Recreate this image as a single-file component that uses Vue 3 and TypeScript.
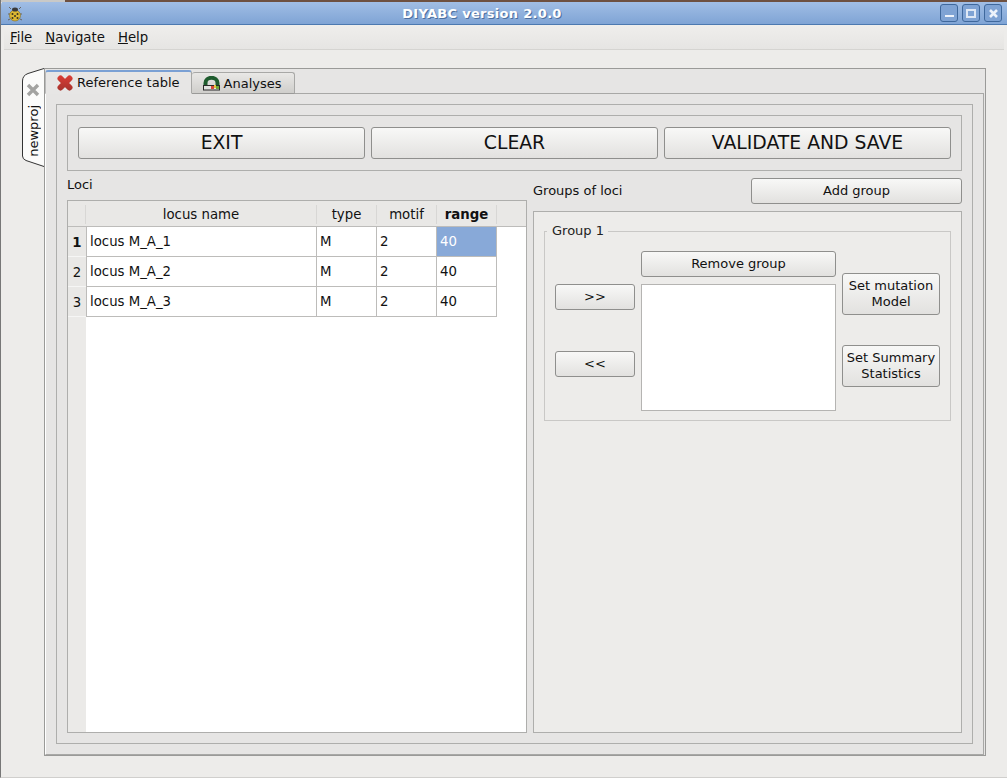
<script setup lang="ts">
interface Locus {
  name: string
  type: string
  motif: number
  range: number
}

const loci: Locus[] = [
  { name: 'locus M_A_1', type: 'M', motif: 2, range: 40 },
  { name: 'locus M_A_2', type: 'M', motif: 2, range: 40 },
  { name: 'locus M_A_3', type: 'M', motif: 2, range: 40 },
]
const menus = [
  { key: 'F', rest: 'ile' },
  { key: 'N', rest: 'avigate' },
  { key: 'H', rest: 'elp' },
]
const topActions = ['EXIT', 'CLEAR', 'VALIDATE AND SAVE']
</script>

<template>
  <div class="window">
    <header class="titlebar">
      <svg class="bug" width="16" height="16" viewBox="0 0 16 16">
        <path d="M4 3 2 1M12 3l2-2M3 8H1M13 8h2M3 13l-2 1M13 13l2 1" stroke="#666" fill="none" />
        <ellipse cx="8" cy="9.5" rx="5.5" ry="5.5" fill="#dcb832" stroke="#8a7430" stroke-width=".7" />
        <ellipse cx="8" cy="3.5" rx="3" ry="2" fill="#3a3a3a" />
        <circle cx="5.5" cy="8" r="1" fill="#3a3320" />
        <circle cx="10.5" cy="8" r="1" fill="#3a3320" />
        <circle cx="8" cy="10" r="1" fill="#3a3320" />
        <circle cx="5.5" cy="12" r="1" fill="#3a3320" />
        <circle cx="10.5" cy="12" r="1" fill="#3a3320" />
      </svg>
      <span class="title">DIYABC version 2.0.0</span>
      <div class="wm-buttons">
        <span class="wm"><i class="wm-min"></i></span>
        <span class="wm"><i class="wm-max"></i></span>
        <span class="wm">
          <svg width="11" height="11" viewBox="0 0 11 11">
            <path d="M2 2l7 7M9 2l-7 7" stroke="#eef3fb" stroke-width="2.6" />
          </svg>
        </span>
      </div>
    </header>

    <nav class="menubar">
      <span v-for="m in menus" :key="m.key" class="menu"><u>{{ m.key }}</u>{{ m.rest }}</span>
    </nav>

    <main class="workspace">
      <div class="side-tab">
        <svg class="side-shape" width="22" height="99" viewBox="0 0 22 99">
          <path d="M22 .5 6 5.5Q.5 7.500 .5 13V88Q.5 91 4 92.500L22 98.500" fill="#fbfbfa" stroke="#333" />
        </svg>
        <svg class="side-close" width="14" height="14" viewBox="0 0 14 14">
          <path d="M2 2l10 10M12 2 2 12" stroke="#a3a3a1" stroke-width="3.4" />
        </svg>
        <span class="side-label">newproj</span>
      </div>

      <div class="tabs">
        <div class="tabbar">
          <div class="tab active">
            <svg width="16" height="16" viewBox="0 0 16 16">
              <defs>
                <linearGradient id="redx" gradientUnits="userSpaceOnUse" x1="0" y1="0" x2="0" y2="16">
                  <stop offset="0" stop-color="#dc3d35" />
                  <stop offset="1" stop-color="#a5332d" />
                </linearGradient>
              </defs>
              <path d="M3.500 3.500l9 9M12.500 3.500l-9 9" stroke="url(#redx)" stroke-width="6" stroke-linecap="round" />
            </svg>
            Reference table
          </div>
          <div class="tab">
            <svg width="17" height="15" viewBox="0 0 17 15">
              <path d="M2.500 10V7a6 5.200 0 0 1 12 0v3" fill="none" stroke="#1f5c2e" stroke-width="4" />
              <rect x=".5" y="9.500" width="16" height="4.500" fill="#e2e2e0" stroke="#2b2b2b" />
              <rect x="8" y="10" width="3" height="3" fill="#d8483a" />
              <rect x="11" y="9" width="2" height="3" fill="#e5c53a" />
              <rect x="13" y="10" width="3" height="3" fill="#6fa83a" />
            </svg>
            Analyses
          </div>
        </div>

        <div class="tab-pane">
          <div class="page">
            <section class="actions">
              <button v-for="a in topActions" :key="a" class="btn big">{{ a }}</button>
            </section>

            <section class="columns">
              <div class="loci">
                <div class="loci-label">Loci</div>
                <div class="table-frame">
                  <div class="grid head">
                    <div class="corner"></div>
                    <div class="hcell">locus name</div>
                    <div class="hcell">type</div>
                    <div class="hcell">motif</div>
                    <div class="hcell strong">range</div>
                  </div>
                  <div class="table-body">
                    <div v-for="(l, i) in loci" :key="l.name" class="grid row">
                      <div class="rownum" :class="{ strong: i === 0 }">{{ i + 1 }}</div>
                      <div class="cell">{{ l.name }}</div>
                      <div class="cell">{{ l.type }}</div>
                      <div class="cell">{{ l.motif }}</div>
                      <div class="cell" :class="{ selected: i === 0 }">{{ l.range }}</div>
                    </div>
                    <div class="rest"></div>
                  </div>
                </div>
              </div>

              <div class="groups">
                <div class="groups-head">
                  <span class="groups-label">Groups of loci</span>
                  <button class="btn add">Add group</button>
                </div>
                <div class="groups-frame">
                  <fieldset class="groupbox">
                    <legend>Group 1</legend>
                    <div class="group-inner">
                      <div class="arrows">
                        <button class="btn arrow">&gt;&gt;</button>
                        <button class="btn arrow">&lt;&lt;</button>
                      </div>
                      <div class="middle">
                        <button class="btn remove">Remove group</button>
                        <div class="listbox"></div>
                      </div>
                      <div class="setters">
                        <button class="btn setter">Set mutation<br />Model</button>
                        <button class="btn setter">Set Summary<br />Statistics</button>
                      </div>
                    </div>
                  </fieldset>
                </div>
              </div>
            </section>
          </div>
        </div>
      </div>
    </main>
  </div>
</template>

<style>
html,
body {
  margin: 0;
  background: #edecea;
}
</style>

<style scoped>
.window {
  width: 1007px;
  height: 778px;
  box-sizing: border-box;
  overflow: hidden;
  display: flex;
  flex-direction: column;
  background: #edecea;
  border-left: 1px solid #777;
  border-bottom: 1px solid #d0cfcd;
  font-family: "DejaVu Sans", sans-serif;
  font-size: 13px;
  color: #111;
}

.titlebar {
  height: 25px;
  flex: none;
  box-sizing: border-box;
  position: relative;
  display: flex;
  align-items: center;
  padding: 2px 5px 0 6px;
  background: linear-gradient(#a4c0e6, #7fa4d5);
  border-bottom: 1px solid #4c79b0;
  border-top-left-radius: 5px;
}

/* sliver of the desktop above the window */
.titlebar::before {
  content: "";
  position: absolute;
  top: 0;
  left: 0;
  right: 0;
  height: 2px;
  background: linear-gradient(90deg, #c9c9c7 64px, #6e5040 64px);
}

.bug {
  margin-top: 2px;
}

.title {
  position: absolute;
  left: 0;
  right: 44px;
  text-align: center;
  font-weight: bold;
  color: #fff;
  text-shadow: 1px 1px 0 #4c6f9f;
  letter-spacing: 0.3px;
}

.wm-buttons {
  margin-left: auto;
  display: flex;
  gap: 4px;
  position: relative;
}

.wm {
  width: 16px;
  height: 16px;
  display: flex;
  align-items: center;
  justify-content: center;
  border: 1px solid #3f689c;
  border-radius: 3px;
  background: #7fa3d4;
}

.wm-min {
  width: 9px;
  height: 2px;
  margin-top: 5px;
  background: #eef3fb;
}

.wm-max {
  width: 6px;
  height: 5px;
  border: 2px solid #dfe8f5;
}

.menubar {
  height: 25px;
  flex: none;
  box-sizing: border-box;
  display: flex;
  align-items: center;
  gap: 13px;
  margin: 0 3px;
  padding: 0 0 0 6px;
  font-size: 13.3px;
  background: linear-gradient(#efeeec, #e6e5e3);
  border-bottom: 1px solid #d5d4d1;
}

.workspace {
  flex: 1;
  min-height: 0;
  display: flex;
  align-items: flex-start;
  padding: 18px 0 0 21px;
}

.side-tab {
  width: 22px;
  height: 99px;
  flex: none;
  box-sizing: border-box;
  position: relative;
  display: flex;
  flex-direction: column;
  align-items: center;
  gap: 8px;
  padding-top: 15px;
}

.side-shape {
  position: absolute;
  top: 0;
  left: 0;
}

.side-close,
.side-label {
  position: relative;
}

.side-label {
  writing-mode: vertical-rl;
  transform: rotate(180deg);
}

.tabs {
  width: 942px;
  height: 688px;
  flex: none;
  box-sizing: border-box;
  display: flex;
  flex-direction: column;
  background: #e6e5e4;
  border: 1px solid #9a9a98;
}

.tabbar {
  height: 25px;
  flex: none;
  display: flex;
  align-items: flex-end;
  position: relative;
  z-index: 1;
  margin-bottom: -1px;
}

.tab {
  height: 22px;
  box-sizing: border-box;
  display: flex;
  align-items: center;
  gap: 4px;
  padding: 0 13px 0 11px;
  background: linear-gradient(#e9e8e6, #cfcecb);
  border: 1px solid #a8a8a6;
  border-bottom: 1px solid #9a9a98;
  border-left: none;
  border-radius: 3px 3px 0 0;
}

.tab.active {
  height: 24px;
  padding: 0 11px;
  background: #e7e6e5;
  border-left: 1px solid #bbb;
  border-top: 2px solid #7aa0d4;
  border-bottom: 1px solid #e7e6e5;
}

.tab-pane {
  flex: 1;
  min-height: 0;
  box-sizing: border-box;
  margin-right: 1px;
  padding: 10px;
  background: #e6e5e4;
  border: 1px solid #a8a8a6;
  border-left-color: #fff;
}

.page {
  height: 100%;
  box-sizing: border-box;
  padding: 10px;
  border: 1px solid #aeaeac;
  display: flex;
  flex-direction: column;
}

.actions {
  height: 56px;
  flex: none;
  box-sizing: border-box;
  display: flex;
  gap: 6px;
  align-items: center;
  padding: 0 10px;
  border: 1px solid #aeaeac;
}

.btn {
  box-sizing: border-box;
  font-family: inherit;
  font-size: 13px;
  color: #111;
  padding: 0;
  background: linear-gradient(#f8f8f7, #e2e1df);
  border: 1px solid #8f8f8d;
  border-radius: 3px;
}

.big {
  width: 287px;
  height: 32px;
  padding-bottom: 2px;
  font-size: 18.8px;
}

.columns {
  flex: 1;
  min-height: 0;
  display: flex;
  gap: 6px;
}

.loci {
  width: 460px;
  flex: none;
  display: flex;
  flex-direction: column;
}

.loci-label {
  height: 29px;
  line-height: 28px;
  flex: none;
}

.table-frame {
  flex: 1;
  min-height: 0;
  display: flex;
  flex-direction: column;
  background: #fff;
  font-size: 13.3px;
  border: 1px solid #aeaeac;
}

.grid {
  display: grid;
  grid-template-columns: 18px 231px 60px 60px 60px;
}

.head {
  height: 26px;
  flex: none;
  background: #e9e8e6;
  border-bottom: 1px solid #bdbcba;
  box-sizing: border-box;
}

.corner {
  border-right: 1px solid #d8d7d5;
  margin: 4px 0 2px;
}

.hcell {
  display: flex;
  align-items: center;
  justify-content: center;
  border-right: 1px solid #d8d7d5;
  margin: 4px 0 2px;
}

.strong {
  font-weight: bold;
}

.table-body {
  flex: 1;
  min-height: 0;
  display: flex;
  flex-direction: column;
}

.row {
  height: 30px;
  flex: none;
}

.rownum {
  display: flex;
  align-items: center;
  justify-content: center;
  background: #e9e8e6;
  box-shadow: inset 0 -1px 0 #f6f6f5;
}

.cell {
  box-sizing: border-box;
  display: flex;
  align-items: center;
  padding-left: 3px;
  border-right: 1px solid #bdbcba;
  border-bottom: 1px solid #bdbcba;
}

.cell:nth-child(2) {
  border-left: 1px solid #bdbcba;
}

.selected {
  background: #88a9d8;
  color: #fff;
}

.rest {
  flex: 1;
  width: 18px;
  background: #ebeae8;
}

.groups {
  flex: 1;
  min-width: 0;
  display: flex;
  flex-direction: column;
}

.groups-head {
  height: 40px;
  flex: none;
  display: flex;
  justify-content: space-between;
  align-items: center;
}

.groups-label {
  padding-bottom: 2px;
}

.add {
  width: 211px;
  height: 26px;
  padding-bottom: 2px;
}

.groups-frame {
  flex: 1;
  min-height: 0;
  box-sizing: border-box;
  padding: 10px;
  background: #edecea;
  border: 1px solid #aeaeac;
}

.groupbox {
  margin: 0;
  height: 199px;
  box-sizing: border-box;
  padding: 0 10px;
  border: 1px solid #c9c8c6;
  min-width: 0;
}

.groupbox legend {
  padding: 0 4px 0 5px;
  margin-left: -8px;
  line-height: 18px;
  color: #222;
}

.group-inner {
  display: flex;
  gap: 6px;
  margin-top: -2px;
}

.arrows {
  width: 80px;
  flex: none;
  display: flex;
  flex-direction: column;
  gap: 41px;
  padding-top: 46px;
}

.arrow {
  height: 26px;
  padding-bottom: 2px;
}

.middle {
  width: 195px;
  flex: none;
  display: flex;
  flex-direction: column;
  gap: 7px;
  padding-top: 13px;
}

.remove {
  height: 26px;
  padding-bottom: 2px;
}

.listbox {
  height: 127px;
  box-sizing: border-box;
  background: #fff;
  border: 1px solid #b5b4b2;
}

.setters {
  width: 98px;
  flex: none;
  display: flex;
  flex-direction: column;
  gap: 30px;
  padding-top: 35px;
}

.setter {
  height: 42px;
  line-height: 16px;
}
</style>
